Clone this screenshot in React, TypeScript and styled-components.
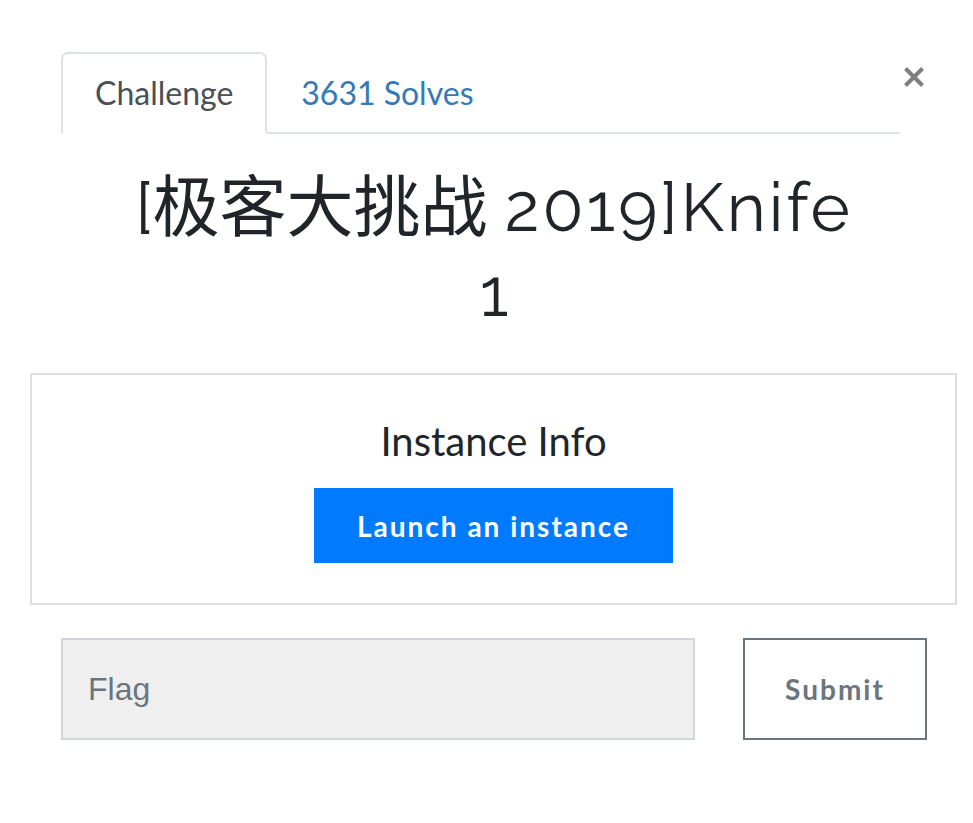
import React from "react";
import styled, { createGlobalStyle } from "styled-components";

const GlobalStyle = createGlobalStyle`
  html, body {
    margin: 0;
    padding: 0;
    background: #ffffff;
  }
  body {
    font-family: Lato, "Noto Sans", "Noto Sans CJK SC", sans-serif;
    color: #212529;
  }
  * { box-sizing: border-box; }
`;

const Page = styled.div`
  width: 927px;
  margin-left: 30px;
  padding-top: 52px;
`;

const Header = styled.div`
  display: flex;
  align-items: flex-start;
  margin-left: 31px;
`;

const Tabs = styled.nav`
  display: flex;
  width: 839px;
  border-bottom: 2px solid #dee2e6;
`;

const Tab = styled.a<{ $active?: boolean }>`
  display: block;
  height: 82px;
  margin-bottom: -2px;
  padding: 0 32px;
  border: 2px solid ${(p) => (p.$active ? "#dee2e6" : "transparent")};
  border-bottom-color: ${(p) => (p.$active ? "#ffffff" : "transparent")};
  border-radius: 7px 7px 0 0;
  background: ${(p) => (p.$active ? "#ffffff" : "transparent")};
  font-family: Lato, sans-serif;
  font-size: 32px;
  line-height: 78px;
  color: ${(p) => (p.$active ? "#495057" : "#337ab7")};
  text-decoration: none;
  cursor: pointer;
`;

const CloseButton = styled.button`
  display: flex;
  align-items: center;
  justify-content: center;
  width: 28px;
  height: 28px;
  margin: 11px 0 0 0;
  padding: 0;
  border: none;
  background: transparent;
  color: #7f7f7f;
  cursor: pointer;
`;

const Title = styled.h1`
  margin: 31px 0 0 31px;
  width: 866px;
  padding: 0 65px;
  text-align: center;
  font-family: Raleway, Lato, "Noto Sans CJK SC", sans-serif;
  font-weight: 400;
  font-size: 67px;
  line-height: 85px;
  color: #212529;
`;

const Latin = styled.span`
  letter-spacing: 3px;
`;

const InstanceCard = styled.section`
  margin-top: 38px;
  border: 2px solid #dedede;
  padding: 42px 0 40px;
  display: flex;
  flex-direction: column;
  align-items: center;
`;

const CardTitle = styled.h4`
  margin: 0;
  font-family: Lato, sans-serif;
  font-weight: 400;
  font-size: 40px;
  line-height: 48px;
  color: #212529;
`;

const PrimaryButton = styled.button`
  margin-top: 23px;
  height: 75px;
  padding: 0 43px;
  border: none;
  background: #007bff;
  color: #ffffff;
  font-family: Lato, sans-serif;
  font-weight: 700;
  font-size: 28px;
  letter-spacing: 2px;
  cursor: pointer;
`;

const FlagRow = styled.form`
  display: flex;
  gap: 48px;
  margin: 33px 0 0 31px;
`;

const FlagInput = styled.input`
  width: 634px;
  height: 102px;
  padding: 0 25px;
  border: 2px solid #d1d6db;
  background: #efefef;
  font-family: "Liberation Sans", Arial, sans-serif;
  font-size: 32px;
  color: #495057;
  outline: none;
  &::placeholder {
    color: #6c757d;
  }
`;

const SubmitButton = styled.button`
  width: 184px;
  height: 102px;
  border: 2px solid #6c757d;
  background: #ffffff;
  color: #6c757d;
  font-family: Lato, sans-serif;
  font-weight: 700;
  font-size: 28px;
  letter-spacing: 2px;
  cursor: pointer;
`;

export default function App() {
  return (
    <>
      <GlobalStyle />
      <Page>
        <Header>
          <Tabs>
            <Tab $active>Challenge</Tab>
            <Tab>3631 Solves</Tab>
          </Tabs>
          <CloseButton aria-label="Close">
            <svg width="22" height="22" viewBox="0 0 22 22">
              <path
                d="M2.5 2.5 L19.5 19.5 M19.5 2.5 L2.5 19.5"
                stroke="currentColor"
                strokeWidth="4"
                strokeLinecap="butt"
              />
            </svg>
          </CloseButton>
        </Header>
        <Title>
          [极客大挑战 <Latin>2019]Knife</Latin> 1
        </Title>
        <InstanceCard>
          <CardTitle>Instance Info</CardTitle>
          <PrimaryButton type="button">Launch an instance</PrimaryButton>
        </InstanceCard>
        <FlagRow onSubmit={(e) => e.preventDefault()}>
          <FlagInput placeholder="Flag" />
          <SubmitButton type="submit">Submit</SubmitButton>
        </FlagRow>
      </Page>
    </>
  );
}
